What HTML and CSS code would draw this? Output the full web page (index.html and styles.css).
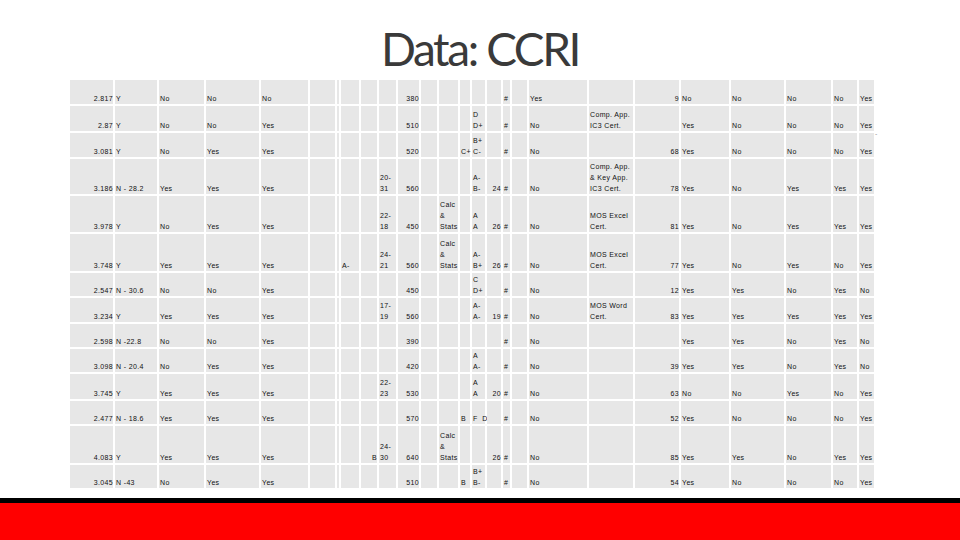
FILE: index.html
```html
<!DOCTYPE html>
<html lang="en">
<head>
<meta charset="utf-8">
<title>Data: CCRI</title>
<link rel="stylesheet" href="styles.css">
</head>
<body>
<div class="slide">
  <h1 class="title">Data: CCRI</h1>
  <div class="grid">
    <div class="row"><div>2.817</div><div>Y</div><div>No</div><div>No</div><div>No</div><div></div><div></div><div></div><div></div><div></div><div>380</div><div></div><div></div><div></div><div></div><div></div><div>#</div><div></div><div>Yes</div><div></div><div>9</div><div>No</div><div>No</div><div>No</div><div>No</div><div>Yes</div></div>
    <div class="row"><div>2.87</div><div>Y</div><div>No</div><div>No</div><div>Yes</div><div></div><div></div><div></div><div></div><div></div><div>510</div><div></div><div></div><div></div><div>D<br>D+</div><div></div><div>#</div><div></div><div>No</div><div>Comp. App.<br>IC3 Cert.</div><div></div><div>Yes</div><div>No</div><div>No</div><div>No</div><div>Yes</div></div>
    <div class="row"><div>3.081</div><div>Y</div><div>No</div><div>Yes</div><div>Yes</div><div></div><div></div><div></div><div></div><div></div><div>520</div><div></div><div></div><div>C+</div><div>B+<br>C-</div><div></div><div>#</div><div></div><div>No</div><div></div><div>68</div><div>Yes</div><div>No</div><div>No</div><div>No</div><div>Yes</div></div>
    <div class="row"><div>3.186</div><div>N - 28.2</div><div>Yes</div><div>Yes</div><div>Yes</div><div></div><div></div><div></div><div></div><div>20-<br>31</div><div>560</div><div></div><div></div><div></div><div>A-<br>B-</div><div>24</div><div>#</div><div></div><div>No</div><div>Comp. App.<br>&amp; Key App.<br>IC3 Cert.</div><div>78</div><div>Yes</div><div>No</div><div>Yes</div><div>Yes</div><div>Yes</div></div>
    <div class="row"><div>3.978</div><div>Y</div><div>No</div><div>Yes</div><div>Yes</div><div></div><div></div><div></div><div></div><div>22-<br>18</div><div>450</div><div></div><div>Calc<br>&amp;<br>Stats</div><div></div><div>A<br>A</div><div>26</div><div>#</div><div></div><div>No</div><div>MOS Excel<br>Cert.</div><div>81</div><div>Yes</div><div>No</div><div>Yes</div><div>Yes</div><div>Yes</div></div>
    <div class="row"><div>3.748</div><div>Y</div><div>Yes</div><div>Yes</div><div>Yes</div><div></div><div></div><div>A-</div><div></div><div>24-<br>21</div><div>560</div><div></div><div>Calc<br>&amp;<br>Stats</div><div></div><div>A-<br>B+</div><div>26</div><div>#</div><div></div><div>No</div><div>MOS Excel<br>Cert.</div><div>77</div><div>Yes</div><div>No</div><div>Yes</div><div>No</div><div>Yes</div></div>
    <div class="row"><div>2.547</div><div>N - 30.6</div><div>No</div><div>No</div><div>Yes</div><div></div><div></div><div></div><div></div><div></div><div>450</div><div></div><div></div><div></div><div>C<br>D+</div><div></div><div>#</div><div></div><div>No</div><div></div><div>12</div><div>Yes</div><div>Yes</div><div>No</div><div>Yes</div><div>No</div></div>
    <div class="row"><div>3.234</div><div>Y</div><div>Yes</div><div>Yes</div><div>Yes</div><div></div><div></div><div></div><div></div><div>17-<br>19</div><div>560</div><div></div><div></div><div></div><div>A-<br>A-</div><div>19</div><div>#</div><div></div><div>No</div><div>MOS Word<br>Cert.</div><div>83</div><div>Yes</div><div>Yes</div><div>Yes</div><div>Yes</div><div>Yes</div></div>
    <div class="row"><div>2.598</div><div>N -22.8</div><div>No</div><div>No</div><div>Yes</div><div></div><div></div><div></div><div></div><div></div><div>390</div><div></div><div></div><div></div><div></div><div></div><div>#</div><div></div><div>No</div><div></div><div></div><div>Yes</div><div>Yes</div><div>No</div><div>Yes</div><div>No</div></div>
    <div class="row"><div>3.098</div><div>N - 20.4</div><div>No</div><div>Yes</div><div>Yes</div><div></div><div></div><div></div><div></div><div></div><div>420</div><div></div><div></div><div></div><div>A<br>A-</div><div></div><div>#</div><div></div><div>No</div><div></div><div>39</div><div>Yes</div><div>Yes</div><div>No</div><div>Yes</div><div>No</div></div>
    <div class="row"><div>3.745</div><div>Y</div><div>Yes</div><div>Yes</div><div>Yes</div><div></div><div></div><div></div><div></div><div>22-<br>23</div><div>530</div><div></div><div></div><div></div><div>A<br>A</div><div>20</div><div>#</div><div></div><div>No</div><div></div><div>63</div><div>No</div><div>No</div><div>Yes</div><div>No</div><div>Yes</div></div>
    <div class="row"><div>2.477</div><div>N - 18.6</div><div>Yes</div><div>Yes</div><div>Yes</div><div></div><div></div><div></div><div></div><div></div><div>570</div><div></div><div></div><div>B</div><div>F&nbsp;&nbsp;D</div><div></div><div>#</div><div></div><div>No</div><div></div><div>52</div><div>Yes</div><div>No</div><div>No</div><div>No</div><div>Yes</div></div>
    <div class="row"><div>4.083</div><div>Y</div><div>Yes</div><div>Yes</div><div>Yes</div><div></div><div></div><div></div><div>B</div><div>24-<br>30</div><div>640</div><div></div><div>Calc<br>&amp;<br>Stats</div><div></div><div></div><div>26</div><div>#</div><div></div><div>No</div><div></div><div>85</div><div>Yes</div><div>Yes</div><div>No</div><div>Yes</div><div>Yes</div></div>
    <div class="row"><div>3.045</div><div>N -43</div><div>No</div><div>Yes</div><div>Yes</div><div></div><div></div><div></div><div></div><div></div><div>510</div><div></div><div></div><div>B</div><div>B+<br>B-</div><div></div><div>#</div><div></div><div>No</div><div></div><div>54</div><div>Yes</div><div>No</div><div>No</div><div>No</div><div>Yes</div></div>
  </div>
  <div class="spacer"></div>
  <div class="rule"></div>
  <div class="band"></div>
  <span class="stray">-</span>
</div>
</body>
</html>
```
FILE: styles.css
```css
* { box-sizing: border-box; }

body {
  margin: 0;
  background: #ffffff;
}

.slide {
  position: relative;
  width: 960px;
  height: 540px;
  display: flex;
  flex-direction: column;
  overflow: hidden;
  font-family: "Liberation Sans", Arial, sans-serif;
}

.title {
  height: 80px;
  margin: 0;
  padding-top: 21px;
  text-align: center;
  font-family: Lato, "Open Sans", sans-serif;
  font-weight: 400;
  font-size: 46px;
  line-height: 55px;
  letter-spacing: -2.4px;
  color: #3a3a3a;
}

.grid {
  margin-left: 70px;
  width: 804px;
  display: grid;
  grid-template-columns: 43px 42px 45px 53px 47px 25px 2px 18px 16px 17px 21px 16px 19px 10px 13px 14px 7px 15px 58px 44px 44px 48px 53px 45px 24px 15px;
  grid-template-rows: 24px 25px 24px 35px 36px 37px 23px 24px 23px 23px 25px 23px 37px 23px;
  gap: 2px;
  font-size: 7px;
  line-height: 11px;
  letter-spacing: 0.35px;
  color: #111111;
}

.row {
  display: contents;
}

.row > div {
  background: #e7e7e7;
  display: flex;
  align-items: flex-end;
  padding-left: 1px;
  white-space: nowrap;
}

.row > div:nth-child(1),
.row > div:nth-child(9),
.row > div:nth-child(11),
.row > div:nth-child(16),
.row > div:nth-child(21) {
  justify-content: flex-end;
  padding-left: 0;
}

.spacer {
  flex: 1;
}

.rule {
  height: 5px;
  background: #000000;
}

.band {
  height: 37px;
  background: #ff0000;
}

.stray {
  position: absolute;
  left: 875px;
  top: 130px;
  font-size: 7px;
  color: #999999;
}
```
